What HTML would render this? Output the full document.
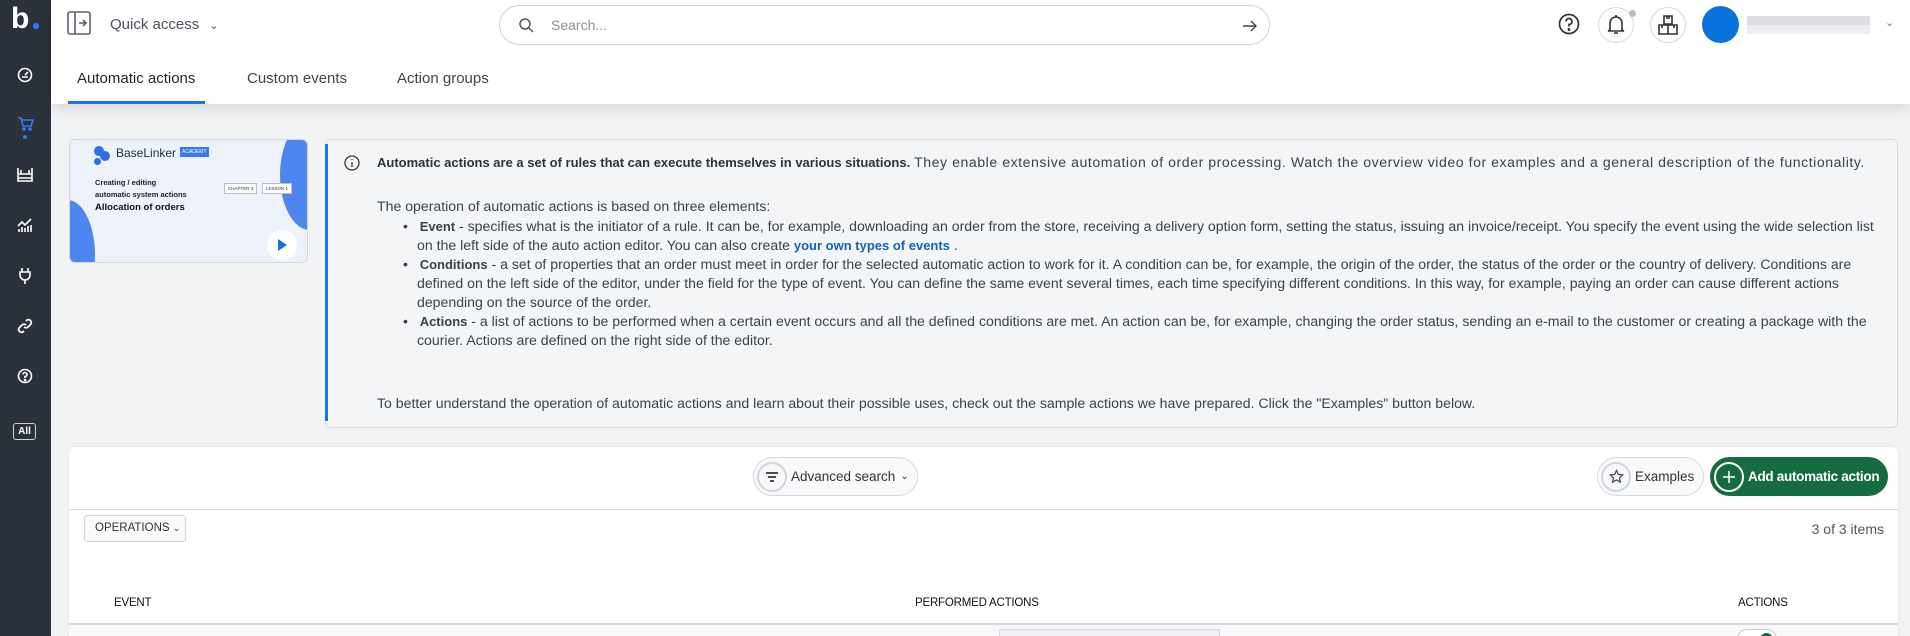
<!DOCTYPE html>
<html style="overflow:hidden;height:636px"><head><meta charset="utf-8"><style>
*{box-sizing:border-box;margin:0;padding:0}
body{width:1910px;height:636px;overflow:hidden;background:#f2f3f5;font-family:"Liberation Sans",sans-serif;color:#2f3640;position:relative}
.abs{position:absolute}
#side{left:0;top:0;width:51px;height:636px;background:#2a313a}
#top{left:51px;top:0;width:1859px;height:104px;background:#fff;box-shadow:0 4px 14px rgba(0,0,0,.12)}
.ic{position:absolute;left:17px}
.tab{position:absolute;top:70px;font-size:15px;color:#3d4550}
.info p{white-space:nowrap}
.info b{font-size:13px}
.btn{position:absolute;border:1px solid #d5d9de;border-radius:20px;background:#f8f9fa;font-size:13.5px;color:#333;display:flex;align-items:center}
.circ{width:30px;height:30px;border-radius:50%;border:2px solid #d2d6db;display:flex;align-items:center;justify-content:center;margin-left:3px;margin-right:4px}
.th{position:absolute;font-size:11.5px;color:#111;letter-spacing:-.2px}
</style></head><body>
<div id="side" class="abs">
 <div class="abs" style="left:11px;top:2px;color:#fff;font-weight:bold;font-size:30px;line-height:34px">b</div>
 <div class="abs" style="left:33px;top:23px;width:6px;height:6px;border-radius:50%;background:#2f7cf6"></div>
 <svg class="ic" style="top:67px" width="16" height="16" viewBox="0 0 16 16" fill="none" stroke="#fff" stroke-width="1.6"><circle cx="8" cy="8" r="6.5"/><path d="M8 8l3-3M5 10h6"/></svg>
 <svg class="ic" style="top:116px" width="17" height="16" viewBox="0 0 17 16" fill="none" stroke="#2f7cf6" stroke-width="1.6"><path d="M1 2h3l2 8h8l2-6H5"/><circle cx="7" cy="13" r="1"/><circle cx="13" cy="13" r="1"/></svg>
 <div class="abs" style="left:23px;top:135px;width:4px;height:4px;border-radius:50%;background:#2f7cf6"></div>
 <svg class="ic" style="top:166px" width="16" height="16" viewBox="0 0 16 16" fill="none" stroke="#fff" stroke-width="1.6"><path d="M1 2v13h14V2M1 8h14M4 8V4M12 8V4M1 12h14"/></svg>
 <svg class="ic" style="top:217px" width="16" height="16" viewBox="0 0 16 16" fill="none" stroke="#fff" stroke-width="1.6"><path d="M1 9l4-4 3 3 6-6M2 15v-3M5 15v-5M8 15v-4M11 15v-6M14 15v-7"/></svg>
 <svg class="ic" style="top:267px" width="16" height="17" viewBox="0 0 16 17" fill="none" stroke="#fff" stroke-width="1.6"><path d="M5 1v4M11 1v4M3 5h10v3a5 5 0 0 1-10 0zM8 13v4"/></svg>
 <svg class="ic" style="top:318px" width="16" height="16" viewBox="0 0 16 16" fill="none" stroke="#fff" stroke-width="1.7"><path d="M7 9a3 3 0 0 0 4 0l3-3a3 3 0 0 0-4-4L9 3M9 7a3 3 0 0 0-4 0L2 10a3 3 0 0 0 4 4l1-1"/></svg>
 <svg class="ic" style="top:368px" width="16" height="16" viewBox="0 0 16 16" fill="none" stroke="#fff" stroke-width="1.6"><circle cx="8" cy="8" r="6.5"/><path d="M6 6.5a2 2 0 1 1 2 2v1.5"/><circle cx="8" cy="12" r=".5" fill="#fff"/></svg>
 <div class="abs" style="left:13px;top:423px;width:23px;height:17px;border:1px solid #cfd3d8;border-radius:3px;color:#fff;font-size:10px;font-weight:bold;text-align:center;line-height:15px">All</div>
</div>
<div id="top" class="abs">
 <svg class="abs" style="left:16px;top:11px" width="24" height="24" viewBox="0 0 24 24" fill="none" stroke="#5a626c" stroke-width="1.6"><rect x="1" y="1" width="22" height="22" rx="2"/><path d="M8 1v22M12 12h7M16 9l3 3-3 3"/></svg>
 <div class="abs" style="left:59px;top:16px;font-size:15px;color:#4a525c">Quick access <span style="font-size:11px;margin-left:6px">&#8964;</span></div>
 <div class="abs" style="left:448px;top:5px;width:771px;height:40px;border:1px solid #d0d4d9;border-radius:20px">
  <svg class="abs" style="left:19px;top:12px" width="15" height="15" viewBox="0 0 15 15" fill="none" stroke="#555" stroke-width="1.5"><circle cx="6" cy="6" r="5"/><path d="M10 10l4 4"/></svg>
  <div class="abs" style="left:51px;top:11px;font-size:14px;color:#8a9098">Search...</div>
  <svg class="abs" style="left:742px;top:13px" width="16" height="14" viewBox="0 0 16 14" fill="none" stroke="#444" stroke-width="1.4"><path d="M1 7h13M9 2l5 5-5 5"/></svg>
 </div>
 <svg class="abs" style="left:1507px;top:13px" width="22" height="22" viewBox="0 0 22 22" fill="none" stroke="#333" stroke-width="1.7"><circle cx="11" cy="11" r="9.5"/><path d="M8 8.5a3 3 0 1 1 3 3v2"/><circle cx="11" cy="16.5" r=".6" fill="#333"/></svg>
 <div class="abs" style="left:1547px;top:7px;width:36px;height:36px;border-radius:50%;border:1px solid #d5d9de"></div>
 <svg class="abs" style="left:1555px;top:14px" width="20" height="22" viewBox="0 0 20 22" fill="none" stroke="#333" stroke-width="1.6"><path d="M4 16V9a6 6 0 0 1 12 0v7l2 1H2zM8 19h4M10 1v2"/></svg>
 <div class="abs" style="left:1578px;top:10px;width:7px;height:7px;border-radius:50%;background:#bbb"></div>
 <div class="abs" style="left:1599px;top:7px;width:36px;height:36px;border-radius:50%;border:1px solid #d5d9de"></div>
 <svg class="abs" style="left:1607px;top:15px" width="20" height="20" viewBox="0 0 20 20" fill="none" stroke="#333" stroke-width="1.6"><path d="M6 1h8v8H6zM1 10h9v9H1zM10 10h9v9h-9zM9 1v3M11 1v3M4 10v3M16 10v3"/></svg>
 <div class="abs" style="left:1651px;top:6px;width:37px;height:37px;border-radius:50%;background:#0a72db"></div>
 <div class="abs" style="left:1696px;top:16px;width:123px;height:18px;background:linear-gradient(#dcdee2 50%,#eceef0 50%)"></div>
 <div class="abs" style="left:1834px;top:16px;font-size:11px;color:#777">&#8964;</div>
 <div class="tab" style="left:26px;color:#1f2630">Automatic actions</div>
 <div class="tab" style="left:196px">Custom events</div>
 <div class="tab" style="left:346px">Action groups</div>
 <div class="abs" style="left:17px;top:101px;width:137px;height:3px;background:#1a73e8"></div>
</div>
<!-- video card -->
<div class="abs" style="left:69px;top:139px;width:239px;height:124px;border:1px solid #d3d7dc;border-radius:6px;overflow:hidden;background:#edf2fb">
 <div class="abs" style="left:-30px;top:60px;width:55px;height:110px;border-radius:50%;background:#4d86ee"></div>
 <div class="abs" style="left:210px;top:-20px;width:60px;height:110px;border-radius:50%;background:#4d86ee"></div>
 <div class="abs" style="left:24px;top:6px;width:10px;height:10px;border-radius:50%;background:#2f6fe5"></div>
 <div class="abs" style="left:30px;top:11px;width:10px;height:10px;border-radius:50%;background:#2f6fe5"></div>
 <div class="abs" style="left:24px;top:18px;width:7px;height:7px;border-radius:50%;background:#2f6fe5"></div>
 <div class="abs" style="left:46px;top:6px;font-size:12px;color:#1d2a44">BaseLinker</div>
 <div class="abs" style="left:110px;top:7px;font-size:5px;background:#3b78ea;color:#fff;padding:2px 2px">ACADEMY</div>
 <div class="abs" style="left:25px;top:37px;font-size:7.5px;font-weight:bold;color:#222;line-height:12px">Creating / editing<br>automatic system actions</div>
 <div class="abs" style="left:25px;top:62px;font-size:9.5px;font-weight:bold;color:#111">Allocation of orders</div>
 <div class="abs" style="left:154px;top:43px;font-size:4.5px;border:1px solid #bbc;padding:2px 3px;background:#fff">CHAPTER 3</div>
 <div class="abs" style="left:192px;top:43px;font-size:4.5px;border:1px solid #bbc;padding:2px 3px;background:#fff">LESSON 1</div>
 <div class="abs" style="left:197px;top:90px;width:30px;height:30px;border-radius:50%;background:#fff"></div>
 <div class="abs" style="left:208px;top:99px;width:0;height:0;border-left:9px solid #1a6fe0;border-top:6px solid transparent;border-bottom:6px solid transparent"></div>
</div>
<!-- info -->
<div class="abs info" style="left:325px;top:139px;width:1573px;height:289px;border:1px solid #d8dbdf;border-radius:6px;background:#f4f5f7;font-size:14.1px;line-height:19px;color:#3a424c">
 <div class="abs" style="left:-1px;top:4px;width:3px;height:277px;background:#1a73e8"></div>
 <svg class="abs" style="left:18px;top:15px" width="16" height="16" viewBox="0 0 16 16" fill="none" stroke="#333" stroke-width="1.3"><circle cx="8" cy="8" r="7"/><path d="M8 7v5M8 4v1"/></svg>
 <p class="abs" style="left:51px;top:13px"><b style="color:#2c333c">Automatic actions are a set of rules that can execute themselves in various situations.</b> <span style="letter-spacing:.55px">They enable extensive automation of order processing. Watch the overview video for examples and a general description of the functionality.</span></p>
 <p class="abs" style="left:51px;top:57px">The operation of automatic actions is based on three elements:</p>
 <div class="abs" style="left:77px;top:77px">
  <p>&bull;&nbsp;&nbsp;&nbsp;<b>Event</b> - specifies what is the initiator of a rule. It can be, for example, downloading an order from the store, receiving a delivery option form, setting the status, issuing an invoice/receipt. You specify the event using the wide selection list</p>
  <p style="padding-left:14px">on the left side of the auto action editor. You can also create <b style="color:#1363b8">your own types of events</b> .</p>
  <p>&bull;&nbsp;&nbsp;&nbsp;<b>Conditions</b> - a set of properties that an order must meet in order for the selected automatic action to work for it. A condition can be, for example, the origin of the order, the status of the order or the country of delivery. Conditions are</p>
  <p style="padding-left:14px">defined on the left side of the editor, under the field for the type of event. You can define the same event several times, each time specifying different conditions. In this way, for example, paying an order can cause different actions</p>
  <p style="padding-left:14px">depending on the source of the order.</p>
  <p>&bull;&nbsp;&nbsp;&nbsp;<b>Actions</b> - a list of actions to be performed when a certain event occurs and all the defined conditions are met. An action can be, for example, changing the order status, sending an e-mail to the customer or creating a package with the</p>
  <p style="padding-left:14px">courier. Actions are defined on the right side of the editor.</p>
 </div>
 <p class="abs" style="left:51px;top:254px">To better understand the operation of automatic actions and learn about their possible uses, check out the sample actions we have prepared. Click the "Examples" button below.</p>
</div>
<!-- lower card -->
<div class="abs" style="left:69px;top:447px;width:1829px;height:189px;background:#fff;border-radius:6px 6px 0 0;box-shadow:0 0 3px rgba(0,0,0,.08);overflow:hidden">
 <div class="btn" style="left:684px;top:10px;width:165px;height:39px"><div class="circ"><svg width="14" height="12" viewBox="0 0 14 12" stroke="#333" stroke-width="1.8"><path d="M1 2h12M3 6h8M5 10h4"/></svg></div>Advanced search <span style="font-size:10px;margin-left:5px">&#8964;</span></div>
 <div class="btn" style="left:1528px;top:10px;width:107px;height:39px"><div class="circ"><svg width="15" height="15" viewBox="0 0 16 16" fill="none" stroke="#444" stroke-width="1.3"><path d="M8 1.5l2 4.3 4.6.5-3.4 3.1 1 4.6L8 11.7 3.8 14l1-4.6L1.4 6.3 6 5.8z"/></svg></div>Examples</div>
 <div class="btn" style="left:1641px;top:10px;width:178px;height:39px;background:#176b40;border-color:#176b40;color:#fff;font-weight:bold;letter-spacing:-.3px"><div class="circ" style="border-color:#fff"><svg width="14" height="14" viewBox="0 0 14 14" stroke="#fff" stroke-width="1.5"><path d="M7 1v12M1 7h12"/></svg></div>Add automatic action</div>
 <div class="abs" style="left:0;top:62px;width:1829px;height:1px;background:#d6dade"></div>
 <div class="abs" style="left:15px;top:68px;width:102px;height:27px;border:1px solid #cfd3d8;border-radius:3px;background:#f8f9fa;font-size:11.5px;line-height:25px;padding-left:10px;color:#333">OPERATIONS <span style="font-size:9px">&#8964;</span></div>
 <div class="abs" style="right:14px;top:74px;font-size:14px;color:#555">3 of 3 items</div>
 <div class="th" style="left:45px;top:150px">EVENT</div>
 <div class="th" style="left:846px;top:150px">PERFORMED ACTIONS</div>
 <div class="th" style="left:1669px;top:150px">ACTIONS</div>
 <div class="abs" style="left:0;top:176px;width:1829px;height:2px;background:#d6dade"></div>
 <div class="abs" style="left:0;top:178px;width:1829px;height:30px;background:#f8f9fa"></div>
 <div class="abs" style="left:930px;top:182px;width:221px;height:20px;border:1px solid #d6dade;background:#f0f1f3"></div>
 <div class="abs" style="left:1668px;top:182px;width:40px;height:20px;border:1px solid #ccc;border-radius:10px;background:#fff"><div style="position:absolute;right:3px;top:3px;width:13px;height:13px;border-radius:50%;background:#176b40"></div></div>
</div>
</body></html>
